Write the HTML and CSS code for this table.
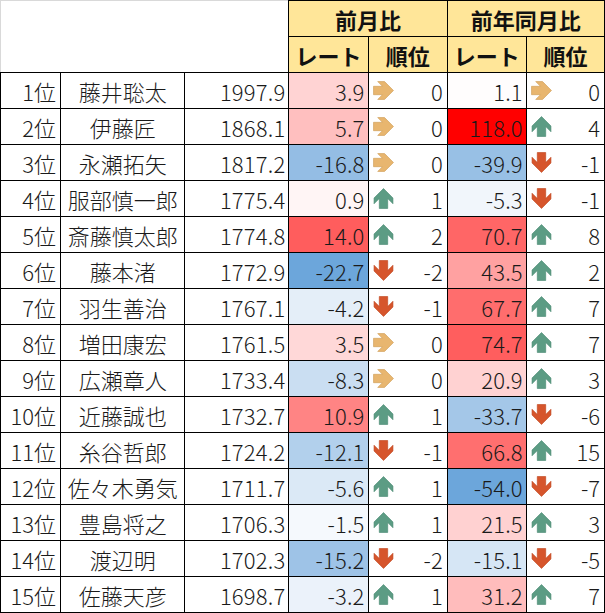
FILE: index.html
```html
<!DOCTYPE html>
<html lang="ja">
<head>
<meta charset="utf-8">
<title>レート</title>
<link rel="stylesheet" href="styles.css">
</head>
<body>
<table class="rank-table">
  <colgroup>
    <col class="c-pos"><col class="c-name"><col class="c-rate"><col class="c-d"><col class="c-r"><col class="c-d"><col class="c-r2">
  </colgroup>
  <thead>
    <tr>
      <td class="blank" colspan="3" rowspan="2"></td>
      <th colspan="2">前月比</th>
      <th colspan="2">前年同月比</th>
    </tr>
    <tr>
      <th>レート</th><th>順位</th><th>レート</th><th>順位</th>
    </tr>
  </thead>
  <tbody>
    <tr><td class="pos">1位</td><td class="name">藤井聡太</td><td class="num">1997.9</td><td class="num" style="background:rgb(255,211,211)">3.9</td><td class="rk"><div class="rk-in"><svg class="ic right" viewBox="0 0 20 20"><path d="M0.5 6H9L4.5 1.5H11L19.5 10L11 18.5H4.5L9 14H0.5Z"/></svg><span>0</span></div></td><td class="num" style="background:rgb(255,253,253)">1.1</td><td class="rk"><div class="rk-in"><svg class="ic right" viewBox="0 0 20 20"><path d="M0.5 6H9L4.5 1.5H11L19.5 10L11 18.5H4.5L9 14H0.5Z"/></svg><span>0</span></div></td></tr>
    <tr><td class="pos">2位</td><td class="name">伊藤匠</td><td class="num">1868.1</td><td class="num" style="background:rgb(255,191,191)">5.7</td><td class="rk"><div class="rk-in"><svg class="ic right" viewBox="0 0 20 20"><path d="M0.5 6H9L4.5 1.5H11L19.5 10L11 18.5H4.5L9 14H0.5Z"/></svg><span>0</span></div></td><td class="num" style="background:rgb(255,0,0)">118.0</td><td class="rk"><div class="rk-in"><svg class="ic up" viewBox="0 0 20 20"><path d="M6 19.5V10L1 15V9.5L10 0.5L19 9.5V15L14 10V19.5Z"/></svg><span>4</span></div></td></tr>
    <tr><td class="pos">3位</td><td class="name">永瀬拓矢</td><td class="num">1817.2</td><td class="num" style="background:rgb(148,189,228)">-16.8</td><td class="rk"><div class="rk-in"><svg class="ic right" viewBox="0 0 20 20"><path d="M0.5 6H9L4.5 1.5H11L19.5 10L11 18.5H4.5L9 14H0.5Z"/></svg><span>0</span></div></td><td class="num" style="background:rgb(152,192,229)">-39.9</td><td class="rk"><div class="rk-in"><svg class="ic down" viewBox="0 0 20 20"><path d="M6 0.5V10L1 5V10.5L10 19.5L19 10.5V5L14 10V0.5Z"/></svg><span>-1</span></div></td></tr>
    <tr><td class="pos">4位</td><td class="name">服部慎一郎</td><td class="num">1775.4</td><td class="num" style="background:rgb(255,245,245)">0.9</td><td class="rk"><div class="rk-in"><svg class="ic up" viewBox="0 0 20 20"><path d="M6 19.5V10L1 15V9.5L10 0.5L19 9.5V15L14 10V19.5Z"/></svg><span>1</span></div></td><td class="num" style="background:rgb(241,246,251)">-5.3</td><td class="rk"><div class="rk-in"><svg class="ic down" viewBox="0 0 20 20"><path d="M6 0.5V10L1 5V10.5L10 19.5L19 10.5V5L14 10V0.5Z"/></svg><span>-1</span></div></td></tr>
    <tr><td class="pos">5位</td><td class="name">斎藤慎太郎</td><td class="num">1774.8</td><td class="num" style="background:rgb(255,93,93)">14.0</td><td class="rk"><div class="rk-in"><svg class="ic up" viewBox="0 0 20 20"><path d="M6 19.5V10L1 15V9.5L10 0.5L19 9.5V15L14 10V19.5Z"/></svg><span>2</span></div></td><td class="num" style="background:rgb(255,102,102)">70.7</td><td class="rk"><div class="rk-in"><svg class="ic up" viewBox="0 0 20 20"><path d="M6 19.5V10L1 15V9.5L10 0.5L19 9.5V15L14 10V19.5Z"/></svg><span>8</span></div></td></tr>
    <tr><td class="pos">6位</td><td class="name">藤本渚</td><td class="num">1772.9</td><td class="num" style="background:rgb(108,166,219)">-22.7</td><td class="rk"><div class="rk-in"><svg class="ic down" viewBox="0 0 20 20"><path d="M6 0.5V10L1 5V10.5L10 19.5L19 10.5V5L14 10V0.5Z"/></svg><span>-2</span></div></td><td class="num" style="background:rgb(255,161,161)">43.5</td><td class="rk"><div class="rk-in"><svg class="ic up" viewBox="0 0 20 20"><path d="M6 19.5V10L1 15V9.5L10 0.5L19 9.5V15L14 10V19.5Z"/></svg><span>2</span></div></td></tr>
    <tr><td class="pos">7位</td><td class="name">羽生善治</td><td class="num">1767.1</td><td class="num" style="background:rgb(228,238,248)">-4.2</td><td class="rk"><div class="rk-in"><svg class="ic down" viewBox="0 0 20 20"><path d="M6 0.5V10L1 5V10.5L10 19.5L19 10.5V5L14 10V0.5Z"/></svg><span>-1</span></div></td><td class="num" style="background:rgb(255,109,109)">67.7</td><td class="rk"><div class="rk-in"><svg class="ic up" viewBox="0 0 20 20"><path d="M6 19.5V10L1 15V9.5L10 0.5L19 9.5V15L14 10V19.5Z"/></svg><span>7</span></div></td></tr>
    <tr><td class="pos">8位</td><td class="name">増田康宏</td><td class="num">1761.5</td><td class="num" style="background:rgb(255,216,216)">3.5</td><td class="rk"><div class="rk-in"><svg class="ic right" viewBox="0 0 20 20"><path d="M0.5 6H9L4.5 1.5H11L19.5 10L11 18.5H4.5L9 14H0.5Z"/></svg><span>0</span></div></td><td class="num" style="background:rgb(255,94,94)">74.7</td><td class="rk"><div class="rk-in"><svg class="ic up" viewBox="0 0 20 20"><path d="M6 19.5V10L1 15V9.5L10 0.5L19 9.5V15L14 10V19.5Z"/></svg><span>7</span></div></td></tr>
    <tr><td class="pos">9位</td><td class="name">広瀬章人</td><td class="num">1733.4</td><td class="num" style="background:rgb(202,222,242)">-8.3</td><td class="rk"><div class="rk-in"><svg class="ic right" viewBox="0 0 20 20"><path d="M0.5 6H9L4.5 1.5H11L19.5 10L11 18.5H4.5L9 14H0.5Z"/></svg><span>0</span></div></td><td class="num" style="background:rgb(255,210,210)">20.9</td><td class="rk"><div class="rk-in"><svg class="ic up" viewBox="0 0 20 20"><path d="M6 19.5V10L1 15V9.5L10 0.5L19 9.5V15L14 10V19.5Z"/></svg><span>3</span></div></td></tr>
    <tr><td class="pos">10位</td><td class="name">近藤誠也</td><td class="num">1732.7</td><td class="num" style="background:rgb(255,132,132)">10.9</td><td class="rk"><div class="rk-in"><svg class="ic up" viewBox="0 0 20 20"><path d="M6 19.5V10L1 15V9.5L10 0.5L19 9.5V15L14 10V19.5Z"/></svg><span>1</span></div></td><td class="num" style="background:rgb(164,199,232)">-33.7</td><td class="rk"><div class="rk-in"><svg class="ic down" viewBox="0 0 20 20"><path d="M6 0.5V10L1 5V10.5L10 19.5L19 10.5V5L14 10V0.5Z"/></svg><span>-6</span></div></td></tr>
    <tr><td class="pos">11位</td><td class="name">糸谷哲郎</td><td class="num">1724.2</td><td class="num" style="background:rgb(178,208,236)">-12.1</td><td class="rk"><div class="rk-in"><svg class="ic down" viewBox="0 0 20 20"><path d="M6 0.5V10L1 5V10.5L10 19.5L19 10.5V5L14 10V0.5Z"/></svg><span>-1</span></div></td><td class="num" style="background:rgb(255,111,111)">66.8</td><td class="rk"><div class="rk-in"><svg class="ic up" viewBox="0 0 20 20"><path d="M6 19.5V10L1 15V9.5L10 0.5L19 9.5V15L14 10V19.5Z"/></svg><span>15</span></div></td></tr>
    <tr><td class="pos">12位</td><td class="name">佐々木勇気</td><td class="num">1711.7</td><td class="num" style="background:rgb(219,233,246)">-5.6</td><td class="rk"><div class="rk-in"><svg class="ic up" viewBox="0 0 20 20"><path d="M6 19.5V10L1 15V9.5L10 0.5L19 9.5V15L14 10V19.5Z"/></svg><span>1</span></div></td><td class="num" style="background:rgb(108,166,219)">-54.0</td><td class="rk"><div class="rk-in"><svg class="ic down" viewBox="0 0 20 20"><path d="M6 0.5V10L1 5V10.5L10 19.5L19 10.5V5L14 10V0.5Z"/></svg><span>-7</span></div></td></tr>
    <tr><td class="pos">13位</td><td class="name">豊島将之</td><td class="num">1706.3</td><td class="num" style="background:rgb(245,249,253)">-1.5</td><td class="rk"><div class="rk-in"><svg class="ic up" viewBox="0 0 20 20"><path d="M6 19.5V10L1 15V9.5L10 0.5L19 9.5V15L14 10V19.5Z"/></svg><span>1</span></div></td><td class="num" style="background:rgb(255,209,209)">21.5</td><td class="rk"><div class="rk-in"><svg class="ic up" viewBox="0 0 20 20"><path d="M6 19.5V10L1 15V9.5L10 0.5L19 9.5V15L14 10V19.5Z"/></svg><span>3</span></div></td></tr>
    <tr><td class="pos">14位</td><td class="name">渡辺明</td><td class="num">1702.3</td><td class="num" style="background:rgb(158,195,231)">-15.2</td><td class="rk"><div class="rk-in"><svg class="ic down" viewBox="0 0 20 20"><path d="M6 0.5V10L1 5V10.5L10 19.5L19 10.5V5L14 10V0.5Z"/></svg><span>-2</span></div></td><td class="num" style="background:rgb(214,230,245)">-15.1</td><td class="rk"><div class="rk-in"><svg class="ic down" viewBox="0 0 20 20"><path d="M6 0.5V10L1 5V10.5L10 19.5L19 10.5V5L14 10V0.5Z"/></svg><span>-5</span></div></td></tr>
    <tr><td class="pos">15位</td><td class="name">佐藤天彦</td><td class="num">1698.7</td><td class="num" style="background:rgb(235,242,250)">-3.2</td><td class="rk"><div class="rk-in"><svg class="ic up" viewBox="0 0 20 20"><path d="M6 19.5V10L1 15V9.5L10 0.5L19 9.5V15L14 10V19.5Z"/></svg><span>1</span></div></td><td class="num" style="background:rgb(255,188,188)">31.2</td><td class="rk"><div class="rk-in"><svg class="ic up" viewBox="0 0 20 20"><path d="M6 19.5V10L1 15V9.5L10 0.5L19 9.5V15L14 10V19.5Z"/></svg><span>7</span></div></td></tr>
  </tbody>
</table>
</body>
</html>
```

FILE: styles.css
```css
html, body {
  margin: 0;
  padding: 0;
  background: #fff;
}
body {
  font-family: "Noto Sans CJK JP", "Noto Sans", sans-serif;
  color: #1a1a1a;
}
.rank-table {
  border-collapse: collapse;
  table-layout: fixed;
  width: 605px;
}
.c-pos { width: 60px; }
.c-name { width: 124px; }
.c-rate { width: 104px; }
.c-d { width: 79px; }
.c-r { width: 79px; }
.c-r2 { width: 78px; }
.rank-table td,
.rank-table th {
  border: 1px solid #000;
  height: 36px;
  padding: 0 4px;
  font-size: 22px;
  line-height: 1;
  white-space: nowrap;
  box-sizing: border-box;
}
.rank-table td {
  font-weight: 300;
}
.rank-table th {
  background: #ffe699;
  font-weight: bold;
  text-align: center;
  color: #111;
}
.rank-table td.blank {
  border-top: 1px solid #d9d9d9;
  border-left: 1px solid #d9d9d9;
  border-right: 1px solid #000;
  background: #fff;
}
.pos {
  text-align: right;
}
.name {
  text-align: center;
}
.rank-table td.num {
  text-align: right;
  letter-spacing: 0.2px;
  padding-right: 3px;
}
.rk-in {
  display: flex;
  align-items: center;
  justify-content: space-between;
}
.ic {
  display: block;
  width: 21px;
  height: 21px;
  flex: 0 0 21px;
  stroke-width: 0.6;
  stroke-linejoin: round;
}
.ic.right { fill: #e8b66f; stroke: #cf9d58; }
.ic.up { fill: #5c9c84; stroke: #4b8a72; }
.ic.down { fill: #d6552c; stroke: #c0461f; }
```
